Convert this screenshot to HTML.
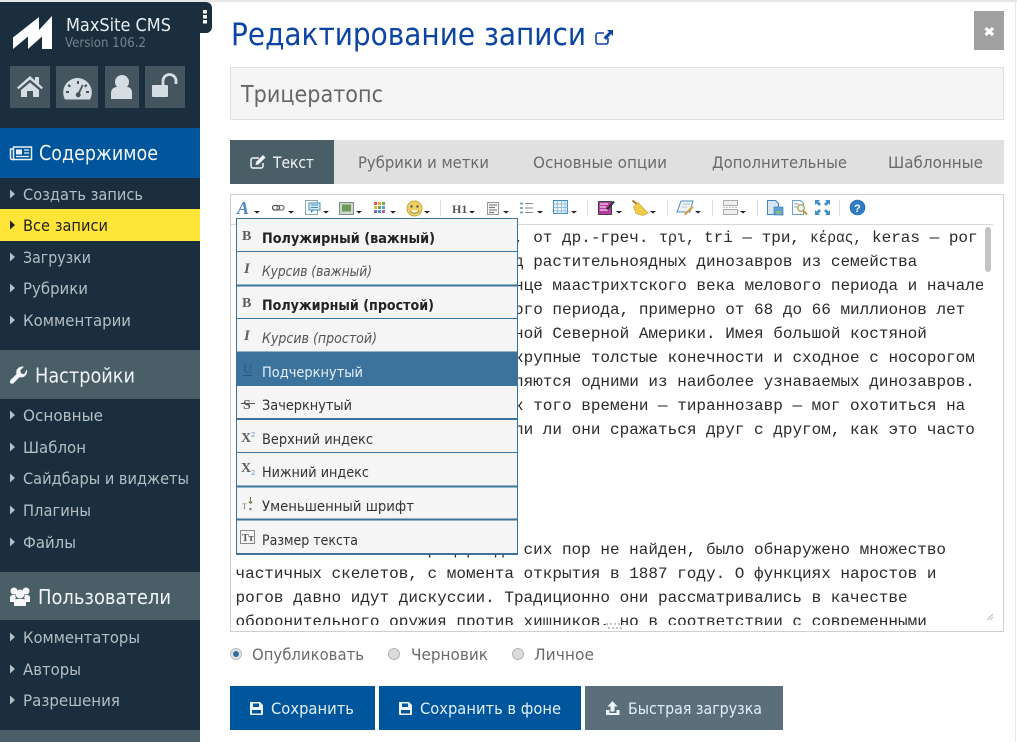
<!DOCTYPE html>
<html><head><meta charset="utf-8"><title>Редактирование записи</title>
<style>
html,body{margin:0;padding:0;background:#fff;width:1017px;height:742px;overflow:hidden}
svg{display:block}
text{font-family:"DejaVu Sans","Liberation Sans",sans-serif;white-space:pre}
.m{font-family:"Liberation Mono",monospace;font-size:16px;fill:#2a2a2a}
.s{font-size:16px;fill:#b4bfc5}
.h{font-size:20px;fill:#f2f5f7}
.t{font-size:16px;fill:#6a6a6a}
.i{font-size:14.5px;fill:#222}
.sep{fill:#dcdcdc}
</style></head><body>
<svg xmlns="http://www.w3.org/2000/svg" width="1017" height="742" viewBox="0 0 1017 742">
<defs>
<clipPath id="ed"><rect x="231" y="225" width="752" height="400"/></clipPath>
</defs>
<rect width="1017" height="742" fill="#fff"/>
<rect width="1017" height="2" fill="#e6e6e6"/>
<rect x="1015" y="2" width="1" height="740" fill="#e8e8e8"/>

<!-- sidebar -->
<rect x="0" y="2" width="200" height="740" fill="#1a2e3d"/>
<path d="M200 2h6a6 6 0 0 1 6 6v19a6 6 0 0 1-6 6h-6z" fill="#1a2e3d"/>
<rect x="203" y="10" width="4" height="3.5" fill="#fff"/><rect x="203" y="15" width="4" height="3.5" fill="#fff"/><rect x="203" y="20" width="4" height="3.5" fill="#fff"/>
<path d="M13 37.500L39 17V30L52 16V49H42V36.500L28 49V36.500L13 49z" fill="#fff"/>
<text x="66" y="31" font-size="18" fill="#e9eef1" textLength="105" lengthAdjust="spacingAndGlyphs">MaxSite CMS</text>
<text x="65" y="47" font-size="13.500" fill="#76848c" textLength="81" lengthAdjust="spacingAndGlyphs">Version 106.2</text>

<rect x="10" y="66" width="40" height="42" fill="#44555f"/>
<rect x="56" y="66" width="42" height="42" fill="#44555f"/>
<rect x="105" y="66" width="34" height="42" fill="#44555f"/>
<rect x="145" y="66" width="40" height="42" fill="#44555f"/>
<path d="M30 76L17 87.500l1.500 1.700L30 79.500l11.500 9.700 1.500-1.700-4-3.500V77h-4v3.500zM21 90l9-7.500 9 7.500v7h-6v-6h-6v6h-6z" fill="#d5dde2"/>
<path fill-rule="evenodd" d="M77.500 78a14.500 14.500 0 0 0-12.500 21.500h25a14.500 14.500 0 0 0-12.500-21.500zM77 81h2v3h-2zM69 84l2 2-1.500 1.500-2-2zM86 84l1.500 1.500-2 2-1.500-1.500zM66 91h3v2h-3zM86 91h3v2h-3zM82 84.500l1.500.7-3.500 7.800a2.500 2.500 0 1 1-1.800-.7z" fill="#d5dde2"/>
<circle cx="122" cy="82" r="7" fill="#d5dde2"/><path d="M111 99v-6c0-4 3-6 6-6h10c3 0 5 2 5 6v6a1 1 0 0 1-1 0z" fill="#d5dde2"/>
<rect x="152" y="85" width="16" height="12" rx="1" fill="#d5dde2"/>
<path d="M163 85v-4a6.500 6.500 0 0 1 13 0v3" fill="none" stroke="#d5dde2" stroke-width="2.800"/>

<rect x="0" y="128" width="200" height="50" fill="#00569c"/>
<g fill="none" stroke="#e8f0f6" stroke-width="1.500"><rect x="13.500" y="147" width="18" height="12.500"/><path d="M13.500 149h-3v9a1.500 1.500 0 0 0 1.500 1.500h2"/></g>
<rect x="16" y="149.500" width="6" height="5" fill="#e8f0f6"/><path d="M24 150h5M24 153h5M16 156.500h13" stroke="#e8f0f6" stroke-width="1.200"/>
<text class="h" x="39" y="160" textLength="119" lengthAdjust="spacingAndGlyphs">Содержимое</text>

<rect x="0" y="209" width="200" height="32" fill="#ffe537"/>
<path d="M10 189.500l5 4.500-5 4.500z" fill="#b4bfc5"/>
<text class="s" x="23" y="200" textLength="120" lengthAdjust="spacingAndGlyphs">Создать запись</text>
<path d="M10 220.500l5 4.500-5 4.500z" fill="#222"/>
<text class="s" x="23" y="231" textLength="85" lengthAdjust="spacingAndGlyphs" style="fill:#222">Все записи</text>
<path d="M10 252.500l5 4.500-5 4.500z" fill="#b4bfc5"/>
<text class="s" x="23" y="263" textLength="68" lengthAdjust="spacingAndGlyphs">Загрузки</text>
<path d="M10 283.500l5 4.500-5 4.500z" fill="#b4bfc5"/>
<text class="s" x="23" y="294" textLength="65" lengthAdjust="spacingAndGlyphs">Рубрики</text>
<path d="M10 315.500l5 4.500-5 4.500z" fill="#b4bfc5"/>
<text class="s" x="23" y="326" textLength="108" lengthAdjust="spacingAndGlyphs">Комментарии</text>

<rect x="0" y="350" width="200" height="49" fill="#4a5e68"/>
<path d="M26.800 369.500c.8 2.300.2 4.700-1.500 6.300-1.600 1.500-3.800 2-5.800 1.300l-5.800 6a2.200 2.200 0 0 1-3.200-3.100l6-5.900c-.6-2.100-.1-4.300 1.400-5.800 1.600-1.600 3.900-2.200 6-1.600l-3.600 3.600.8 3.100 3 .8z" fill="#f2f5f7"/>
<text class="h" x="35" y="382.500" textLength="100" lengthAdjust="spacingAndGlyphs">Настройки</text>

<path d="M10 410.500l5 4.500-5 4.500z" fill="#b4bfc5"/>
<text class="s" x="23" y="421" textLength="80" lengthAdjust="spacingAndGlyphs">Основные</text>
<path d="M10 442.500l5 4.500-5 4.500z" fill="#b4bfc5"/>
<text class="s" x="23" y="453" textLength="63" lengthAdjust="spacingAndGlyphs">Шаблон</text>
<path d="M10 473.500l5 4.500-5 4.500z" fill="#b4bfc5"/>
<text class="s" x="23" y="484" textLength="166" lengthAdjust="spacingAndGlyphs">Сайдбары и виджеты</text>
<path d="M10 505.500l5 4.500-5 4.500z" fill="#b4bfc5"/>
<text class="s" x="23" y="516" textLength="68" lengthAdjust="spacingAndGlyphs">Плагины</text>
<path d="M10 537.500l5 4.500-5 4.500z" fill="#b4bfc5"/>
<text class="s" x="23" y="548" textLength="53" lengthAdjust="spacingAndGlyphs">Файлы</text>

<rect x="0" y="572" width="200" height="48" fill="#4a5e68"/>
<g fill="#f5f7f8"><circle cx="14" cy="591" r="3.500"/><circle cx="26" cy="591" r="3.500"/><circle cx="20" cy="594" r="4.500"/><path d="M10 602v-4c0-2 1-3 3-3h2c1 2 1 3 0 5v2zM30 602v-4c0-2-1-3-3-3h-2c-1 2-1 3 0 5v2z"/><path d="M14 606v-4c0-2 2-3 3-3h6c1 0 3 1 3 3v4z"/></g>
<text class="h" x="38" y="604" textLength="133" lengthAdjust="spacingAndGlyphs">Пользователи</text>

<path d="M10 632.500l5 4.500-5 4.500z" fill="#b4bfc5"/>
<text class="s" x="23" y="643" textLength="117" lengthAdjust="spacingAndGlyphs">Комментаторы</text>
<path d="M10 664.500l5 4.500-5 4.500z" fill="#b4bfc5"/>
<text class="s" x="23" y="675" textLength="58" lengthAdjust="spacingAndGlyphs">Авторы</text>
<path d="M10 695.500l5 4.500-5 4.500z" fill="#b4bfc5"/>
<text class="s" x="23" y="706" textLength="97" lengthAdjust="spacingAndGlyphs">Разрешения</text>
<rect x="0" y="730" width="200" height="12" fill="#4a5e68"/>

<!-- header -->
<text x="231" y="45" font-size="31" fill="#0b45a3" textLength="355" lengthAdjust="spacingAndGlyphs">Редактирование записи</text>
<path d="M604 33h-6a2 2 0 0 0-2 2v7a2 2 0 0 0 2 2h8a2 2 0 0 0 2-2v-4" fill="none" stroke="#0b45a3" stroke-width="1.600"/>
<path d="M607 30h6v6l-2-2-5 6-2.500-2.500 5.500-5.500z" fill="#0b45a3"/>
<rect x="974" y="11" width="30" height="39" fill="#a0a0a0"/>
<path d="M985.500 28l7.500 7M993 28l-7.500 7" stroke="#fff" stroke-width="3.200"/>

<rect x="230.500" y="67.500" width="773" height="52" fill="#f5f5f5" stroke="#dedede"/>
<text x="241" y="102" font-size="23" fill="#666" textLength="142" lengthAdjust="spacingAndGlyphs">Трицератопс</text>

<!-- tabs -->
<rect x="230" y="140" width="774" height="44" fill="#e0e0e0"/>
<rect x="230" y="140" width="104" height="44" fill="#4a5e68"/>
<path d="M259 158h-6a2 2 0 0 0-2 2v6a2 2 0 0 0 2 2h8a2 2 0 0 0 2-2v-3" fill="none" stroke="#f2f5f7" stroke-width="1.500"/>
<path d="M256 162l7-7 2.500 2.500-7 7-3 .5z" fill="#f2f5f7"/>
<text x="273" y="168" font-size="16" fill="#f2f5f7" textLength="41" lengthAdjust="spacingAndGlyphs">Текст</text>
<text class="t" x="358" y="168" textLength="131" lengthAdjust="spacingAndGlyphs">Рубрики и метки</text>
<text class="t" x="533" y="168" textLength="134" lengthAdjust="spacingAndGlyphs">Основные опции</text>
<text class="t" x="712" y="168" textLength="135" lengthAdjust="spacingAndGlyphs">Дополнительные</text>
<text class="t" x="888" y="168" textLength="95" lengthAdjust="spacingAndGlyphs">Шаблонные</text>

<!-- editor -->
<rect x="230.500" y="194.500" width="773" height="437" fill="#fff" stroke="#cfcfcf"/>
<rect x="231" y="224" width="762" height="1" fill="#d8d8d8"/>
<g clip-path="url(#ed)">
<text class="m" x="514" y="242">, от др.-греч.</text>
<text class="m" x="659" y="242" textLength="36" lengthAdjust="spacingAndGlyphs">τρι,</text>
<text class="m" x="704" y="242">tri — три,</text>
<text class="m" x="810" y="242" textLength="52" lengthAdjust="spacingAndGlyphs">κέρας,</text>
<text class="m" x="872" y="242">keras — рог</text>
<text class="m" x="514" y="266">д растительноядных динозавров из семейства</text>
<text class="m" x="514" y="290">нце маастрихтского века мелового периода и начале</text>
<text class="m" x="514" y="314">ого периода, примерно от 68 до 66 миллионов лет</text>
<text class="m" x="514" y="338">ной Северной Америки. Имея большой костяной</text>
<text class="m" x="514" y="362">крупные толстые конечности и сходное с носорогом</text>
<text class="m" x="514" y="386">ляются одними из наиболее узнаваемых динозавров.</text>
<text class="m" x="514" y="410">к того времени — тираннозавр — мог охотиться на</text>
<text class="m" x="514" y="434">ли ли они сражаться друг с другом, как это часто</text>
<text class="m" x="235.500" y="554">Хотя полный скелет трицер. до сих пор не найден, было обнаружено множество</text>
<text class="m" x="235.500" y="578">частичных скелетов, с момента открытия в 1887 году. О функциях наростов и</text>
<text class="m" x="235.500" y="602">рогов давно идут дискуссии. Традиционно они рассматривались в качестве</text>
<text class="m" x="235.500" y="626">оборонительного оружия против хищников, но в соответствии с современными</text>
</g>
<rect x="985" y="227" width="6" height="45" rx="3" fill="#c4c4c4"/>
<g fill="#c4c4c4"><rect x="606" y="623" width="2" height="2"/><rect x="610" y="623" width="2" height="2"/><rect x="614" y="623" width="2" height="2"/><rect x="618" y="623" width="2" height="2"/><rect x="622" y="623" width="2" height="2"/><rect x="608" y="627" width="2" height="2"/><rect x="612" y="627" width="2" height="2"/><rect x="616" y="627" width="2" height="2"/><rect x="620" y="627" width="2" height="2"/></g>
<path d="M987 620l6-6M990 620l3-3" stroke="#bbb" stroke-width="1"/>

<!-- toolbar -->
<text x="237" y="214" font-size="18" fill="#4a86c8" style="font-family:'Liberation Serif',serif;font-weight:bold;font-style:italic">A</text>
<path d="M254 211h6l-3 2.500zM288 211h6l-3 2.500zM323 211h6l-3 2.500zM356 211h6l-3 2.500zM390 211h6l-3 2.500zM424 211h6l-3 2.500zM469 211h6l-3 2.500zM503 211h6l-3 2.500zM537 211h6l-3 2.500zM571 211h6l-3 2.500zM616 211h6l-3 2.500zM650 211h6l-3 2.500zM695 211h6l-3 2.500zM740 211h6l-3 2.500z" fill="#222"/>
<rect x="272.500" y="205.500" width="7" height="4.500" rx="2.200" fill="none" stroke="#555" stroke-width="1.300"/><rect x="277" y="205.500" width="7" height="4.500" rx="2.200" fill="none" stroke="#777" stroke-width="1.300"/>
<rect x="305.500" y="200.500" width="12" height="14" fill="#fbfbfb" stroke="#8aa"/><rect x="309" y="203" width="11" height="7" fill="#dcecf6" stroke="#3e8ebd"/><path d="M311 210v3l3-3z" fill="#3e8ebd"/><path d="M311 205h7M311 207.500h7" stroke="#3e8ebd"/>
<rect x="339.500" y="202.500" width="14" height="12" fill="#cfd8d0" stroke="#7d8d8a"/><rect x="342" y="204.500" width="9" height="7" fill="#6f9c55"/>
<g><rect x="374" y="202" width="3" height="3" fill="#e2574c"/><rect x="378" y="202" width="3" height="3" fill="#e8a33c"/><rect x="382" y="202" width="3" height="3" fill="#70ad47"/><rect x="374" y="206" width="3" height="3" fill="#d9c13a"/><rect x="378" y="206" width="3" height="3" fill="#68a85a"/><rect x="382" y="206" width="3" height="3" fill="#5b9bd5"/><rect x="374" y="210" width="3" height="3" fill="#7d6bc2"/><rect x="378" y="210" width="3" height="3" fill="#4d8fc9"/><rect x="382" y="210" width="3" height="3" fill="#b45ea8"/></g>
<circle cx="414.500" cy="208.500" r="7.500" fill="#efd265" stroke="#c4a640"/><circle cx="411.500" cy="206.500" r="1.200" fill="#555"/><circle cx="417.500" cy="206.500" r="1.200" fill="#555"/><path d="M410 210.500c2 3.500 7 3.500 9 0" fill="#fff" stroke="#8a7020" stroke-width=".8"/>
<rect x="440" y="200" width="1" height="16" class="sep"/>
<text x="452" y="213" font-size="12" fill="#555" style="font-family:'Liberation Serif',serif;font-weight:bold">H1</text>
<rect x="487.500" y="202.500" width="11" height="12" fill="#f2f2f2" stroke="#999"/><path d="M489 205h8M489 207.500h6M489 210h8M489 212.500h5" stroke="#777"/>
<path d="M525 203.500h8M525 208h8M525 212.500h8" stroke="#888"/><path d="M520 203.500h3M520 208h3M520 212.500h3" stroke="#5a9fd0" stroke-width="1.800"/>
<rect x="553.500" y="200.500" width="14" height="13" fill="#eaf3f9" stroke="#3f8fc2"/><path d="M553 204h15M553 207.500h15M553 211h15M557.500 201v13M561.500 201v13M565 201v13" stroke="#7fb3d6" stroke-width=".7"/>
<rect x="587" y="200" width="1" height="16" class="sep"/>
<rect x="598.500" y="201.500" width="13" height="13" fill="#b93aa0" stroke="#444"/><path d="M600 204h8M600 207h6M600 210h8" stroke="#fff" stroke-width=".9"/><path d="M606 209l7-8 2 1-7 8z" fill="#333"/>
<path d="M632.500 200.500l5 4" stroke="#a8752a" stroke-width="2"/><path d="M638 202.500l10 10.500-5 2.500-7-2-2.500-6.500z" fill="#f0cc4a" stroke="#c69d2a" stroke-width=".6"/>
<rect x="667" y="200" width="1" height="16" class="sep"/>
<path d="M681 201h12l-3 11h-13z" fill="#eef3f7" stroke="#4d8ec0"/><path d="M683 204h7M682 207h5" stroke="#9bb" stroke-width=".8"/><path d="M684 214l8-8 1.500 1.500-8 8z" fill="#d9a13a"/>
<rect x="712" y="200" width="1" height="16" class="sep"/>
<path d="M723.500 200.500h14v5h-14zM723.500 209.500h14v5h-14z" fill="#f0f0f0" stroke="#aaa"/><path d="M723 207.500h15" stroke="#bbb" stroke-dasharray="2 1"/>
<rect x="757" y="200" width="1" height="16" class="sep"/>
<path d="M767.500 200.500h8l3 3v5h-3v6h-8z" fill="#d6e6f2" stroke="#3f88bd"/><rect x="774" y="207" width="9" height="8" fill="#5fa3cf" stroke="#2f78ad" stroke-width=".6"/><rect x="776" y="211" width="5" height="3" fill="#8fb98f"/>
<path d="M792.500 200.500h8l3 3v11h-11z" fill="#f7fafc" stroke="#6ca0c4"/><path d="M794 204h5M794 207h3" stroke="#88b" stroke-width=".7"/><circle cx="801" cy="208" r="3.300" fill="#dff" stroke="#b89a3c" stroke-width="1.200"/><path d="M803 210.500l4 4" stroke="#b89a3c" stroke-width="2"/>
<path d="M815 200h5l-1.500 1.500 2.500 2.500-2 2-2.500-2.500-1.500 1.500zM830 200v5l-1.500-1.500-2.500 2.500-2-2 2.500-2.500-1.500-1.500zM815 215v-5l1.500 1.500 2.500-2.500 2 2-2.500 2.500 1.500 1.500zM830 215h-5l1.500-1.500-2.500-2.500 2-2 2.500 2.500 1.500-1.500z" fill="#3f8fc9"/>
<rect x="839" y="200" width="1" height="16" class="sep"/>
<circle cx="857.500" cy="207.500" r="7.500" fill="#2f7dc6" stroke="#1f5f9f" stroke-width=".6"/><text x="854" y="212" font-size="11" font-weight="bold" fill="#fff" style="font-family:'Liberation Sans',sans-serif">?</text>

<!-- dropdown -->
<rect x="236.500" y="218.500" width="281" height="335" fill="#f5f5f5" stroke="#3c739c"/>
<rect x="237" y="351.500" width="280" height="34.500" fill="#3c739c"/>
<g fill="#3c739c">
<rect x="236" y="251" width="282" height="1"/>
<rect x="236" y="284.500" width="282" height="2"/>
<rect x="236" y="318" width="282" height="1"/>
<rect x="236" y="418" width="282" height="2"/>
<rect x="236" y="452" width="282" height="1"/>
<rect x="236" y="485.500" width="282" height="2"/>
<rect x="236" y="518.500" width="282" height="2"/>
<rect x="236" y="553" width="282" height="2"/>
</g>
<g fill="#5f5f5f" font-weight="bold">
<text x="242" y="240" font-size="14" style="font-family:'Liberation Serif',serif">B</text>
<text x="244" y="273" font-size="15" font-style="italic" style="font-family:'Liberation Serif',serif">I</text>
<text x="242" y="307" font-size="14" style="font-family:'Liberation Serif',serif">B</text>
<text x="244" y="340" font-size="15" font-style="italic" style="font-family:'Liberation Serif',serif">I</text>
<text x="243" y="373" font-size="13" font-weight="normal" style="font-family:'Liberation Serif',serif;fill:#2d5a7c">U</text>
<text x="243" y="409" font-size="14" style="font-family:'Liberation Serif',serif">S</text>
<text x="241" y="442" font-size="14" style="font-family:'Liberation Serif',serif">X</text>
<text x="241" y="472" font-size="14" style="font-family:'Liberation Serif',serif">X</text>
</g>
<rect x="243" y="375" width="9" height="1" fill="#2d5a7c"/>
<rect x="241" y="403" width="14" height="1" fill="#555"/>
<text x="251" y="437" font-size="7" fill="#6d9fcb">2</text>
<text x="251" y="475" font-size="7" fill="#6d9fcb">2</text>
<text x="242" y="509" font-size="8" fill="#777" style="font-family:'Liberation Serif',serif">T</text>
<path d="M250.500 497v6M248.800 501.500l1.700 2 1.700-2" fill="none" stroke="#6a7d4a"/><circle cx="250.500" cy="509" r="1.300" fill="#888"/>
<rect x="240.500" y="530.500" width="14" height="13" fill="#f8f8f8" stroke="#8a8a8a"/>
<text x="242" y="541" font-size="10" font-weight="bold" fill="#555" style="font-family:'Liberation Serif',serif">Tт</text>

<text class="i" x="262" y="243" font-weight="bold" textLength="173" lengthAdjust="spacingAndGlyphs">Полужирный (важный)</text>
<text class="i" x="262" y="276" font-style="italic" textLength="110" lengthAdjust="spacingAndGlyphs" style="fill:#555">Курсив (важный)</text>
<text class="i" x="262" y="310" font-weight="bold" textLength="172" lengthAdjust="spacingAndGlyphs">Полужирный (простой)</text>
<text class="i" x="262" y="343" font-style="italic" textLength="115" lengthAdjust="spacingAndGlyphs" style="fill:#555">Курсив (простой)</text>
<text class="i" x="262" y="377" textLength="101" lengthAdjust="spacingAndGlyphs" style="fill:#e4eef6">Подчеркнутый</text>
<text class="i" x="262" y="410" textLength="90" lengthAdjust="spacingAndGlyphs" style="fill:#333">Зачеркнутый</text>
<text class="i" x="262" y="444" textLength="111" lengthAdjust="spacingAndGlyphs" style="fill:#333">Верхний индекс</text>
<text class="i" x="262" y="477" textLength="107" lengthAdjust="spacingAndGlyphs" style="fill:#333">Нижний индекс</text>
<text class="i" x="262" y="511" textLength="152" lengthAdjust="spacingAndGlyphs" style="fill:#333">Уменьшенный шрифт</text>
<text class="i" x="262" y="545" textLength="96" lengthAdjust="spacingAndGlyphs" style="fill:#333">Размер текста</text>

<!-- radios -->
<circle cx="236" cy="654" r="5.500" fill="#e4e4e4" stroke="#bdbdbd"/><circle cx="236" cy="654" r="3" fill="#2f6f9f"/>
<text class="t" x="252" y="660" textLength="112" lengthAdjust="spacingAndGlyphs">Опубликовать</text>
<circle cx="394" cy="654" r="5.500" fill="#dcdcdc" stroke="#b5b5b5"/>
<text class="t" x="411" y="660" textLength="77" lengthAdjust="spacingAndGlyphs">Черновик</text>
<circle cx="518" cy="654" r="5.500" fill="#dcdcdc" stroke="#b5b5b5"/>
<text class="t" x="534" y="660" textLength="60" lengthAdjust="spacingAndGlyphs">Личное</text>

<!-- buttons -->
<rect x="230" y="686" width="145" height="44" fill="#00569c"/>
<rect x="379" y="686" width="202" height="44" fill="#00569c"/>
<rect x="585" y="686" width="198" height="44" fill="#5a6f7a"/>
<path fill-rule="evenodd" d="M250 702h10l3 3v9a1 1 0 0 1-1 1h-11a1 1 0 0 1-1-1zM253 703.500v3.500h6v-3.500zM252 710v3.500h9v-3.500z" fill="#eef4f9"/>
<path fill-rule="evenodd" d="M399 702h10l3 3v9a1 1 0 0 1-1 1h-11a1 1 0 0 1-1-1zM402 703.500v3.500h6v-3.500zM401 710v3.500h9v-3.500z" fill="#eef4f9"/>
<path d="M612.500 701l5 5.500h-3v5h-4v-5h-3zM606 710h3.500v3h7v-3h3v5h-13.500z" fill="#eef4f9"/>
<text x="271" y="714" font-size="16" fill="#e4eef6" textLength="83" lengthAdjust="spacingAndGlyphs">Сохранить</text>
<text x="420" y="714" font-size="16" fill="#e4eef6" textLength="141" lengthAdjust="spacingAndGlyphs">Сохранить в фоне</text>
<text x="628" y="714" font-size="16" fill="#e4eef6" textLength="134" lengthAdjust="spacingAndGlyphs">Быстрая загрузка</text>
</svg>
</body></html>
